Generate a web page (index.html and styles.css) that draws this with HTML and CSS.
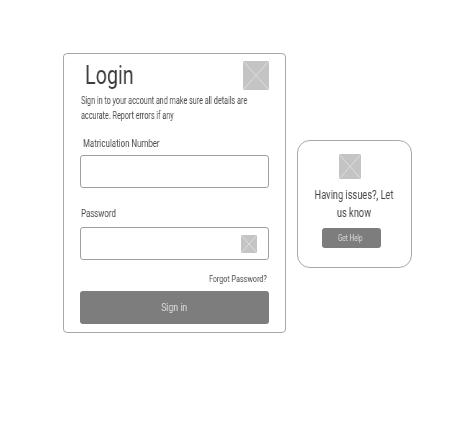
FILE: index.html
```html
<!DOCTYPE html>
<html lang="en">
<head>
<meta charset="utf-8">
<title>Login</title>
<link rel="stylesheet" href="styles.css">
</head>
<body>
<main class="stage">
  <section class="card login">
    <header class="login-head">
      <h1>Login</h1>
      <svg class="ph ph-logo" viewBox="0 0 26 29" preserveAspectRatio="none"><rect width="26" height="29"/><path d="M0 0L26 29M26 0L0 29"/></svg>
    </header>
    <p class="intro">Sign in to your account and make sure all details are accurate. Report errors if any</p>
    <label class="label label-matric">Matriculation Number</label>
    <div class="field"></div>
    <label class="label label-pass">Password</label>
    <div class="field field-pass">
      <svg class="ph ph-eye" viewBox="0 0 16 18" preserveAspectRatio="none"><rect width="16" height="18"/><path d="M0 0L16 18M16 0L0 18"/></svg>
    </div>
    <a class="forgot">Forgot Password?</a>
    <button class="signin" type="button"><span class="squeeze">Sign in</span></button>
  </section>
  <aside class="card help">
    <svg class="ph ph-help" viewBox="0 0 22 25" preserveAspectRatio="none"><rect width="22" height="25"/><path d="M0 0L22 25M22 0L0 25"/></svg>
    <p class="help-text">Having issues?, Let us know</p>
    <button class="help-btn" type="button"><span class="squeeze">Get Help</span></button>
  </aside>
</main>
</body>
</html>
```

FILE: styles.css
```css
* { box-sizing: border-box; }
html, body { margin: 0; height: 100%; background: #fff; }
body { font-family: Roboto, "Liberation Sans", sans-serif; color: #444; }
.stage { display: flex; align-items: flex-start; padding: 53px 0 0 63px; gap: 11px; }
.card { background: #fff; border: 1px solid #a8a8a8; }
.login { width: 223px; height: 280px; border-radius: 4px; padding: 7px 16px 0 16px; }
.login-head { display: flex; justify-content: space-between; align-items: flex-start; padding-left: 5px; height: 30px; }
h1 { margin: 0; font-size: 25px; line-height: 29px; font-weight: 400; color: #3c3c3c; transform: scaleX(.79); transform-origin: left center; will-change: transform; }
.ph { display: block; flex: none; }
.ph rect { fill: #c4c4c4; }
.ph path { stroke: #dedede; stroke-width: 1; fill: none; }
.ph-logo { width: 26px; height: 29px; }
.intro { margin: 2px 0 0 1px; width: 240px; font-size: 10px; line-height: 15px; color: #4a4a4a; transform: scaleX(.72); transform-origin: left top; will-change: transform; }
.label { display: block; font-size: 10px; line-height: 14px; color: #4a4a4a; transform: scaleX(.79); transform-origin: left center; will-change: transform; }
.label-matric { margin: 14px 0 0 3px; }
.label-pass { margin: 19px 0 1px 1px; }
.field { height: 33px; margin-top: 4px; border: 1px solid #a0a0a0; border-radius: 3px; background: #fff; }
.field-pass { display: flex; align-items: center; justify-content: flex-end; padding-right: 11px; margin-top: 6px; }
.ph-eye { width: 16px; height: 18px; }
.forgot { display: block; margin-top: 13px; padding-right: 3px; text-align: right; font-size: 9.6px; line-height: 12px; color: #4a4a4a; transform: scaleX(.75); transform-origin: right center; will-change: transform; }
.signin { display: block; width: 100%; height: 33px; margin-top: 6px; padding: 0 0 2px; border: 0; border-radius: 3px; background: #7d7d7d; color: #dcdcdc; font: 400 11.5px Roboto, sans-serif; }
.squeeze { display: inline-block; transform: scaleX(.76); will-change: transform; }
.help { margin-top: 87px; width: 115px; height: 128px; border-radius: 13px; display: flex; flex-direction: column; align-items: center; padding-top: 13px; }
.ph-help { width: 22px; height: 25px; margin-right: 10px; }
.help-text { margin: 8px 2px 0 0; width: 110px; text-align: center; font-size: 12px; line-height: 17.5px; color: #444; transform: scaleX(.77); will-change: transform; }
.help-btn { width: 59px; height: 20px; margin: 6px 6px 0 0; border: 0; border-radius: 3px; background: #7d7d7d; color: #dcdcdc; font: 400 8.5px Roboto, sans-serif; padding: 0 3px 0 0; }
```
